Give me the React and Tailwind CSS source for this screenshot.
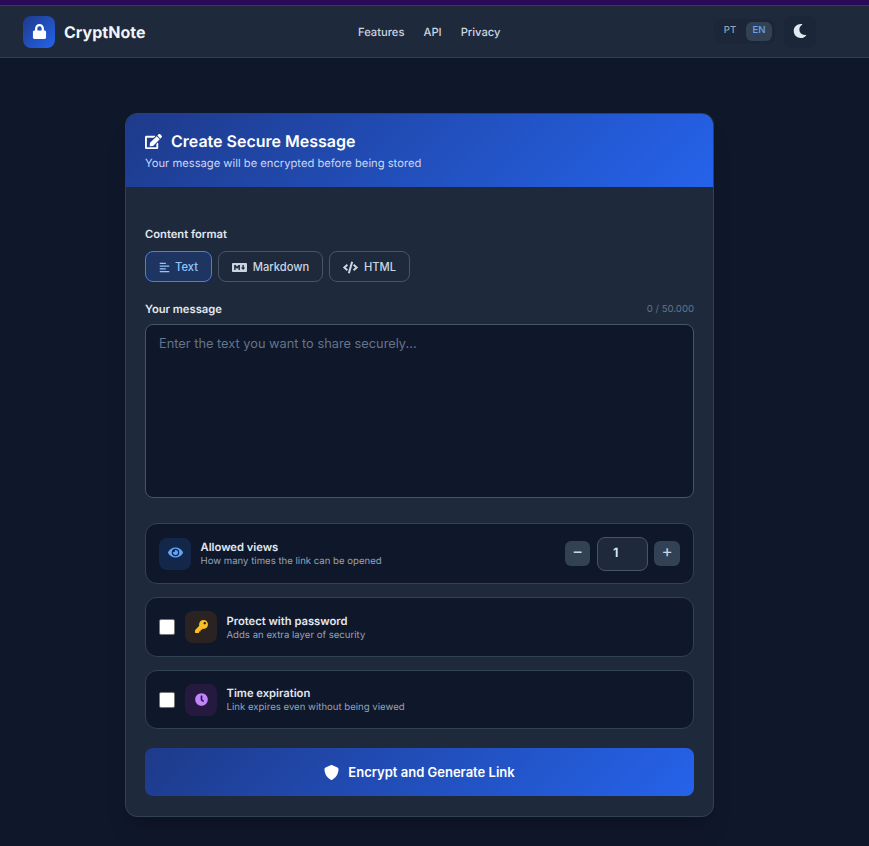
import React from 'react';
import {
  FaLock,
  FaMoon,
  FaEdit,
  FaAlignLeft,
  FaMarkdown,
  FaCode,
  FaEye,
  FaKey,
  FaClock
} from 'react-icons/fa';
import { FaShield } from 'react-icons/fa6';

const OptionRow = ({ icon, iconBox, title, hint, checkbox, children, height }) => (
  <div className={`flex items-center rounded-xl border border-[#334155] bg-[#0f172a] px-[13px] ${height}`}>
    {checkbox && (
      <span className="mr-[10px] h-4 w-4 rounded-[2px] border border-[#767676] bg-white" />
    )}
    <div className={`flex h-8 w-8 items-center justify-center rounded-lg pb-px text-[13px] ${iconBox}`}>
      {icon}
    </div>
    <div className="ml-[9.5px] flex-1 pt-px">
      <p className="text-[11.2px] leading-[14px] font-semibold text-[#e2e8f0]">{title}</p>
      <p className="mt-px text-[9.6px] leading-[13px] text-[#94a3b8]">{hint}</p>
    </div>
    {children}
  </div>
);

const App = () => {
  return (
    <div className="min-h-[846px] bg-[#0f172a] font-['Inter',sans-serif] [text-rendering:geometricPrecision]">
      <div className="h-[6px] border-b border-[#43306f] bg-[#2a0a58]" />
      <header className="flex h-[52px] items-center border-b border-[#334155] bg-[#1e293b] pl-[23px] pr-[53px]">
        <div className="flex w-[335px] items-center gap-[9px]">
          <div className="flex h-8 w-8 items-center justify-center rounded-lg bg-[linear-gradient(135deg,#1e3a8a,#2563eb)] text-[15px] text-white">
            <FaLock />
          </div>
          <span className="text-base font-bold text-[#f1f5f9]">CryptNote</span>
        </div>
        <nav className="flex gap-[19px] pt-[2px] text-[11.2px] font-medium text-[#cbd5e1]">
          <a>Features</a>
          <a>API</a>
          <a>Privacy</a>
        </nav>
        <div className="ml-auto flex items-center gap-[9px]">
          <div className="flex items-center gap-[3px] rounded-lg bg-[#1b2638] p-[3px] text-[9.6px] font-medium">
            <span className="flex h-[19px] w-[26px] items-center justify-center text-[#94a3b8]">PT</span>
            <span className="flex h-[19px] w-[26px] items-center justify-center rounded-md bg-[#334155] text-[#60a5fa]">EN</span>
          </div>
          <button className="flex h-8 w-8 items-center justify-center rounded-lg bg-[#1b2638] pb-[2px] text-[14px] text-[#e2e8f0]">
            <FaMoon />
          </button>
        </div>
      </header>

      <main className="flex justify-center pt-[55px] pr-[30px]">
        <section className="w-[589px] overflow-hidden rounded-xl border border-[#334155] bg-[#1e293b] shadow-xl">
          <div className="h-[73px] bg-[linear-gradient(135deg,#1e3a8a,#2563eb)] px-[19px] pt-4">
            <h1 className="flex items-center gap-[9px] text-base leading-[22px] font-semibold text-white">
              <FaEdit className="text-[17px]" />
              Create Secure Message
            </h1>
            <p className="mt-1 text-[11.2px] leading-[15px] text-[#c9d6f5]">
              Your message will be encrypted before being stored
            </p>
          </div>

          <div className="px-[19px] pt-10 pb-5">
            <label className="block text-[11.2px] leading-[14px] font-semibold text-[#e2e8f0]">Content format</label>
            <div className="mt-[10px] flex gap-[6px]">
              <button className="flex h-[31px] w-[67px] items-center justify-center gap-[5px] rounded-lg border border-[#3b82f6] bg-[#1f3561] pt-px text-[11.2px] font-medium text-[#93c5fd]">
                <FaAlignLeft className="text-[11px]" /> Text
              </button>
              <button className="flex h-[31px] w-[105px] items-center justify-center gap-[6px] rounded-lg border border-[#475569] pt-px text-[11.2px] font-medium text-[#cbd5e1]">
                <FaMarkdown className="text-[15px]" /> Markdown
              </button>
              <button className="flex h-[31px] w-[81px] items-center justify-center gap-[6px] rounded-lg border border-[#475569] pt-px text-[11.2px] font-medium text-[#cbd5e1]">
                <FaCode className="text-[15px]" /> HTML
              </button>
            </div>

            <div className="mt-[20px] flex h-[14px] items-start justify-between">
              <label className="text-[11.2px] leading-[14px] font-semibold text-[#e2e8f0]">Your message</label>
              <span className="mt-px text-[9.6px] leading-[14px] text-[#64748b]">0 / 50.000</span>
            </div>
            <textarea
              readOnly
              placeholder="Enter the text you want to share securely..."
              className="mt-[8px] block h-[174px] w-full resize-none rounded-lg border border-[#475569] bg-[#0f172a] px-[13px] py-[9px] text-[12.8px] leading-[19px] text-[#e2e8f0] outline-none placeholder:text-[#64748b]"
            />

            <div className="mt-[25px] flex flex-col gap-[13px]">
              <OptionRow
                height="h-[61px]"
                icon={<FaEye className="mb-[2px] text-[15px] text-[#60a5fa]" />}
                iconBox="bg-[#13274b]"
                title="Allowed views"
                hint="How many times the link can be opened"
              >
                <div className="flex items-center">
                  <button className="h-[25px] w-[25px] rounded-md bg-[#334155] pb-1 text-[17px] leading-none text-[#cbd5e1]">−</button>
                  <div className="ml-[7px] flex h-[34px] w-[51px] items-center rounded-lg border border-[#475569] bg-[#1e293b] pl-[15px] text-[12.8px] font-semibold text-[#e2e8f0]">
                    1
                  </div>
                  <button className="ml-[6px] h-[25px] w-[26px] rounded-md bg-[#334155] pb-1 text-[17px] leading-none text-[#cbd5e1]">+</button>
                </div>
              </OptionRow>
              <OptionRow
                checkbox
                height="h-[60px]"
                icon={<FaKey className="text-[#fbbf24]" />}
                iconBox="bg-[#2b2321]"
                title="Protect with password"
                hint="Adds an extra layer of security"
              />
              <OptionRow
                checkbox
                height="h-[59px]"
                icon={<FaClock className="text-[#c084fc]" />}
                iconBox="bg-[#26193f]"
                title="Time expiration"
                hint="Link expires even without being viewed"
              />
            </div>

            <button className="mt-[19px] flex h-12 w-full items-center justify-center gap-[9px] rounded-lg bg-[linear-gradient(135deg,#1e3a8a,#2563eb)] pt-px text-[13px] font-semibold text-white">
              <FaShield className="text-[15px]" /> Encrypt and Generate Link
            </button>
          </div>
        </section>
      </main>
    </div>
  );
};
export default App;
